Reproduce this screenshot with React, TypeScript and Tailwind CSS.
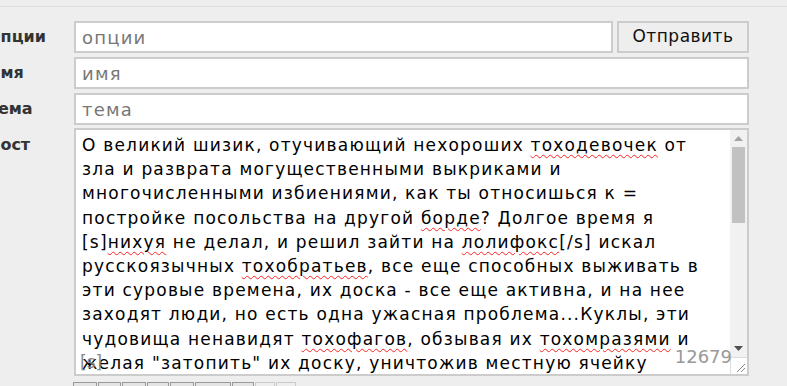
import React from "react";

const lines: { t: string; u?: boolean }[][] = [
  [{ t: "О великий шизик, отучивающий нехороших " }, { t: "тоходевочек", u: true }, { t: " от" }],
  [{ t: "зла и разврата могущественными выкриками и" }],
  [{ t: "многочисленными избиениями, как ты относишься к =" }],
  [{ t: "постройке посольства на другой " }, { t: "борде", u: true }, { t: "? Долгое время я" }],
  [{ t: "[s]" }, { t: "нихуя", u: true }, { t: " не делал, и решил зайти на " }, { t: "лолифокс", u: true }, { t: "[/s] искал" }],
  [{ t: "русскоязычных " }, { t: "тохобратьев", u: true }, { t: ", все еще способных выживать в" }],
  [{ t: "эти суровые времена, их доска - все еще активна, и на нее" }],
  [{ t: "заходят люди, но есть одна ужасная проблема...Куклы, эти" }],
  [{ t: "чудовища ненавидят " }, { t: "тохофагов", u: true }, { t: ", обзывая их " }, { t: "тохомразями", u: true }, { t: " и" }],
  [{ t: "желая \"затопить\" их доску, уничтожив местную ячейку" }],
];

const toolButtons = [24, 23, 24, 22, 24, 36, 22, 20, 20];

function Label({ children }: { children: React.ReactNode }) {
  return <div className="pt-[6px] text-[16px] font-bold text-[#333333] leading-[20px]">{children}</div>;
}

export default function App() {
  return (
    <div className="h-[386px] w-[787px] overflow-hidden bg-[#eeeeee] font-['DejaVu_Sans',sans-serif]">
      <div className="mt-[6px] border-t border-[#dddddd]" />
      <div className="-ml-[13px] mt-[14px] grid grid-cols-[87px_675px] gap-y-[4px]">
        <Label>Опции</Label>
        <div className="flex gap-[4px]">
          <input
            className="h-[32px] w-[539px] border-2 border-[#cccccc] bg-white px-[6px] text-[18px] tracking-[1.2px] text-black outline-none placeholder:text-[#777777]"
            placeholder="опции"
          />
          <button className="h-[32px] flex-1 border-2 border-[#cccccc] bg-[#eeeeee] text-[17px] tracking-[0.5px] text-[#111111]">
            Отправить
          </button>
        </div>

        <Label>Имя</Label>
        <input
          className="h-[32px] border-2 border-[#cccccc] bg-white px-[6px] text-[18px] tracking-[1.2px] text-black outline-none placeholder:text-[#777777]"
          placeholder="имя"
        />

        <Label>Тема</Label>
        <input
          className="h-[32px] border-2 border-[#cccccc] bg-white px-[6px] text-[18px] tracking-[1.2px] text-black outline-none placeholder:text-[#777777]"
          placeholder="тема"
        />

        <Label>Пост</Label>
        <div className="relative -mt-[1px] flex h-[248px] border-2 border-[#cccccc] bg-white">
          <div className="flex-1 overflow-hidden pl-[6px] pt-[3px] text-[17px] leading-[24.2px] tracking-[1.2px] text-black">
            {lines.map((line, i) => (
              <div key={i} className="whitespace-pre">
                {line.map((s, j) =>
                  s.u ? (
                    <span key={j} className="underline decoration-wavy decoration-[#ff2020] decoration-1 underline-offset-[3px]">
                      {s.t}
                    </span>
                  ) : (
                    <span key={j}>{s.t}</span>
                  )
                )}
              </div>
            ))}
          </div>
          <div className="flex w-[17px] flex-col bg-[#f1f1f1]">
            <div className="flex h-[17px] items-center justify-center">
              <svg width="9" height="5" viewBox="0 0 9 5"><path d="M0 5 L4.5 0 L9 5 Z" fill="#a3a3a3" /></svg>
            </div>
            <div className="mx-[2px] h-[76px] bg-[#c1c1c1]" />
            <div className="flex-1" />
            <div className="flex h-[17px] items-center justify-center">
              <svg width="9" height="5" viewBox="0 0 9 5"><path d="M0 0 L9 0 L4.5 5 Z" fill="#505050" /></svg>
            </div>
            <div className="flex h-[17px] items-end justify-end border-l border-t border-[#dddddd] bg-white p-[2px]">
              <svg width="9" height="9" viewBox="0 0 9 9">
                <path d="M1 9 L9 1 M5 9 L9 5" stroke="#888888" strokeWidth="1" />
              </svg>
            </div>
          </div>
          <div className="absolute bottom-[7px] right-[15px] text-[18px] leading-[20px] text-[#999999]">12679</div>
          <div className="absolute bottom-[2px] left-[4px] text-[17px] leading-[20px] text-[#888888]">[s]</div>
        </div>
      </div>
      <div className="ml-[73px] mt-[6px] flex gap-[1px]">
        {toolButtons.map((w, i) => (
          <div
            key={i}
            style={{ width: w }}
            className={`h-[20px] border border-[#999999] ${i > 6 ? "bg-[#eeeeee] opacity-40" : "bg-[#e4e4e4]"}`}
          />
        ))}
      </div>
    </div>
  );
}
